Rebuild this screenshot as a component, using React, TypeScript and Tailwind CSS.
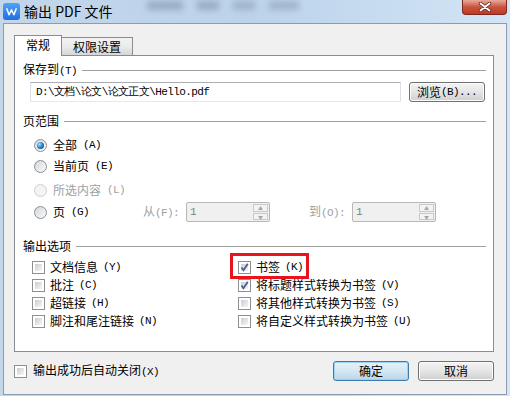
import React from 'react'

const mono = "font-['Liberation_Mono',monospace] text-[11px] tracking-[-0.6px]"

// split ascii runs so they get the narrow SimSun-like look
function T({ s }: { s: string }) {
    const parts = s.split(/([\x20-\x7e]+)/).filter(Boolean)
    return (
        <>
            {parts.map((p, i) =>
                /^[\x20-\x7e]+$/.test(p) ? (
                    <span key={i} className={mono}>{p}</span>
                ) : (
                    <span key={i}>{p}</span>
                )
            )}
        </>
    )
}

function Radio({ on, disabled }: { on?: boolean; disabled?: boolean }) {
    return (
        <span
            className={`w-[13px] h-[13px] shrink-0 rounded-full border flex items-center justify-center ${
                disabled
                    ? 'border-[#cfcfcf] bg-[#f4f4f4]'
                    : 'border-[#8c8f94] bg-linear-to-br from-[#d4d7db] to-[#fafafa]'
            }`}
        >
            {on && (
                <span className="w-[7px] h-[7px] rounded-full bg-[radial-gradient(circle_at_35%_35%,#a8e4ff,#1d72bd_55%,#0b4683)]" />
            )}
        </span>
    )
}

function Check({ on }: { on?: boolean }) {
    return (
        <span className="w-[13px] h-[13px] shrink-0 border border-[#8e8f8f] bg-white p-[2px] flex">
            <span className="flex-1 relative bg-linear-to-br from-[#c9cdd3] to-[#f7f7f7]">
                {on && (
                    <svg viewBox="0 0 11 11" className="absolute left-[-2px] top-[-2px] w-[11px] h-[11px]">
                        <path d="M2.5 5.5 L4.5 8.2 L8.8 1.8" fill="none" stroke="#4a5e96" strokeWidth="1.8" />
                    </svg>
                )}
            </span>
        </span>
    )
}

function Spin() {
    return (
        <div className="w-[84px] h-[20px] border border-[#b7b7b7] rounded-[2px] bg-[#f0f0f0] flex">
            <span className={`flex-1 pl-[3px] leading-[18px] text-[#7f7f7f] ${mono}`}>1</span>
            <div className="w-[15px] my-[1px] mr-[1px] flex flex-col gap-px">
                {['▲', '▼'].map((a) => (
                    <div key={a} className="flex-1 border border-[#c9c9c9] bg-[#f3f3f3] flex items-center justify-center text-[5px] text-[#a5a5a5] leading-none">
                        {a}
                    </div>
                ))}
            </div>
        </div>
    )
}

function Group({ label }: { label: string }) {
    return (
        <div className="h-[14px] flex items-center">
            <span className="leading-[14px]"><T s={label} /></span>
            <span className="flex-1 h-px bg-[#a0a0a0] ml-[5px]" />
        </div>
    )
}

function Btn({ children, focus, w }: { children: React.ReactNode; focus?: boolean; w: string }) {
    return (
        <div
            className={`${w} h-[20px] rounded-[3px] border flex items-center justify-center ${
                focus
                    ? 'border-[#3d7bad] bg-linear-to-b from-[#e6f1f8] via-[#d5e7f3] to-[#b9d5e9] shadow-[inset_0_0_0_1px_#9fd2f2]'
                    : 'border-[#707070] bg-linear-to-b from-[#f4f4f4] via-[#e5e5e5] to-[#cfcfcf] shadow-[inset_0_0_0_1px_#fcfcfc]'
            }`}
        >
            {children}
        </div>
    )
}

export default function App() {
    const leftOpts = ['文档信息(Y)', '批注(C)', '超链接(H)', '脚注和尾注链接(N)']
    const rightOpts: [string, boolean][] = [
        ['书签(K)', true],
        ['将标题样式转换为书签(V)', true],
        ['将其他样式转换为书签(S)', false],
        ['将自定义样式转换为书签(U)', false],
    ]

    return (
        <div className="w-[510px] h-[396px] overflow-hidden bg-linear-to-r from-[#c3d6ea] via-[#bcd3ea] to-[#d3e5f6] flex flex-col text-[12px] text-black font-['Noto_Sans_CJK_SC',sans-serif]">
            {/* Title bar */}
            <div className="h-[23px] flex items-start relative">
                <div className="w-[17px] h-[17px] mt-[3px] ml-[3px] rounded-[3px] bg-linear-to-b from-[#4fa3f7] to-[#1f6fe0] flex items-center justify-center">
                    <svg viewBox="0 0 16 16" className="w-[13px] h-[13px]">
                        <path d="M2 4 L5 12 L8 6 L11 12 L14 4" fill="none" stroke="white" strokeWidth="1.8" strokeLinejoin="round" />
                    </svg>
                </div>
                <span className="ml-[4px] mt-[2px] text-[14px] leading-[18px] font-['Noto_Sans_CJK_SC',sans-serif]">
                    输出 PDF 文件
                </span>
                <div className="flex gap-[14px] ml-[34px] mt-[1px] blur-[3px] opacity-60">
                    <span className="w-[36px] h-[9px] bg-[#7f93a9]" />
                    <span className="w-[22px] h-[9px] bg-[#7f93a9]" />
                    <span className="w-[22px] h-[9px] bg-[#8da0b4]" />
                    <span className="w-[30px] h-[9px] bg-[#8da0b4]" />
                </div>
                <div className="ml-auto mr-[3px] w-[45px] h-[15px] rounded-b-[4px] border border-t-0 border-[#7a2a20] bg-linear-to-b from-[#e9a99a] via-[#c9533d] to-[#bf3a23] flex items-center justify-center">
                    <svg viewBox="0 0 14 10" className="w-[14px] h-[10px]">
                        <path d="M2.5 1.5 L11.5 8.5 M11.5 1.5 L2.5 8.5" stroke="#5a1f18" strokeWidth="3.4" strokeLinecap="round" />
                        <path d="M2.5 1.5 L11.5 8.5 M11.5 1.5 L2.5 8.5" stroke="white" strokeWidth="2" strokeLinecap="round" />
                    </svg>
                </div>
            </div>

            {/* Client */}
            <div className="mx-[3px] h-[372px] border border-[#8c9cb0] bg-[#f0f0f0] pt-[11px] pl-[10px]">
                {/* Tabs */}
                <div className="relative z-10 flex items-end h-[21px] -mb-px">
                    <div className="w-[48px] h-[21px] border border-b-0 border-[#898c95] bg-white flex items-center justify-center pb-[2px]">
                        常规
                    </div>
                    <div className="w-[71px] h-[19px] border border-l-0 border-[#898c95] bg-linear-to-b from-[#f2f2f2] via-[#ebebeb] to-[#d6d6d6] flex items-center justify-center">
                        权限设置
                    </div>
                </div>

                {/* Panel */}
                <div className="w-[480px] h-[297px] border border-[#898c95] bg-white pl-[8px] pr-[7px]">
                    <div className="mt-[7px]">
                        <Group label="保存到(T)" />
                    </div>
                    <div className="mt-[5px] flex items-center">
                        <div className={`ml-[7px] w-[371px] h-[20px] border border-[#abadb3] border-b-[#e3e9ef] border-x-[#dbdfe6] flex items-center pl-[5px] ${mono} text-[11px]`}>
                            <T s="D:\文档\论文\论文正文\Hello.pdf" />
                        </div>
                        <div className="ml-[8px]">
                            <Btn w="w-[76px]">
                                <T s="浏览(B)..." />
                            </Btn>
                        </div>
                    </div>

                    <div className="mt-[12px]">
                        <Group label="页范围" />
                    </div>
                    <div className="ml-[11px]">
                        <div className="mt-[10px] h-[14px] flex items-center gap-[6px]">
                            <Radio on />
                            <T s="全部(A)" />
                        </div>
                        <div className="mt-[7px] h-[14px] flex items-center gap-[6px]">
                            <Radio />
                            <T s="当前页(E)" />
                        </div>
                        <div className="mt-[10px] h-[14px] flex items-center gap-[6px] text-[#a0a0a0]">
                            <Radio disabled />
                            <T s="所选内容(L)" />
                        </div>
                        <div className="mt-[5px] h-[20px] flex items-center">
                            <div className="w-[109px] flex items-center gap-[6px]">
                                <Radio />
                                <T s="页(G)" />
                            </div>
                            <span className="w-[43px] text-[#a0a0a0]"><T s="从(F):" /></span>
                            <Spin />
                            <span className="ml-[39px] w-[43px] text-[#a0a0a0]"><T s="到(O):" /></span>
                            <Spin />
                        </div>
                    </div>

                    <div className="mt-[17px]">
                        <Group label="输出选项" />
                    </div>
                    <div className="mt-[5px] ml-[9px] grid grid-cols-[206px_1fr] relative">
                        <div className="flex flex-col">
                            {leftOpts.map((o) => (
                                <div key={o} className="h-[18px] flex items-center gap-[5px]">
                                    <Check />
                                    <T s={o} />
                                </div>
                            ))}
                        </div>
                        <div className="flex flex-col">
                            {rightOpts.map(([o, on]) => (
                                <div key={o} className="h-[18px] flex items-center gap-[5px]">
                                    <Check on={on} />
                                    <T s={o} />
                                </div>
                            ))}
                        </div>
                        {/* highlight */}
                        <div className="absolute left-[198px] top-[-5px] w-[79px] h-[26px] border-[3px] border-[#e8141b]" />
                    </div>
                </div>

                {/* Bottom row */}
                <div className="mt-[9px] w-[480px] h-[20px] flex items-center">
                    <Check />
                    <span className="ml-[6px]"><T s="输出成功后自动关闭(X)" /></span>
                    <div className="ml-auto flex gap-[9px]">
                        <Btn focus w="w-[76px]">确定</Btn>
                        <Btn w="w-[76px]">取消</Btn>
                    </div>
                </div>
            </div>
        </div>
    )
}
